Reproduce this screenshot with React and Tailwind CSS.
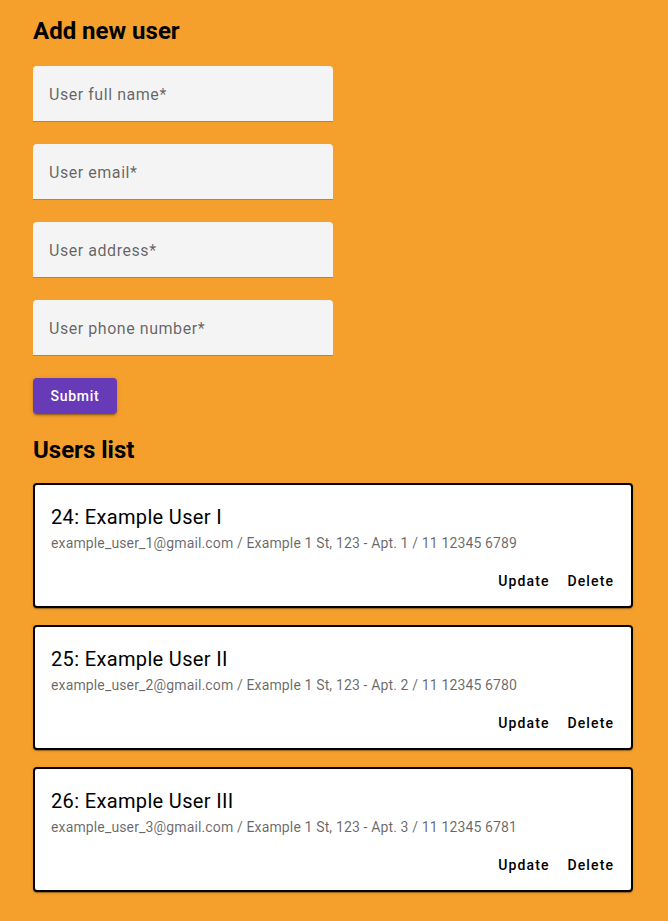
import React from "react";

const fields = ["User full name*", "User email*", "User address*", "User phone number*"];
const users = [
  { id: 24, name: "Example User I", email: "example_user_1@gmail.com", addr: "Example 1 St, 123 - Apt. 1", phone: "11 12345 6789" },
  { id: 25, name: "Example User II", email: "example_user_2@gmail.com", addr: "Example 1 St, 123 - Apt. 2", phone: "11 12345 6780" },
  { id: 26, name: "Example User III", email: "example_user_3@gmail.com", addr: "Example 1 St, 123 - Apt. 3", phone: "11 12345 6781" },
];

export default function App() {
  return (
    <div className="min-h-[921px] bg-[#f5a02c] px-[33px] pt-[15px] pb-[20px] font-['Roboto',sans-serif]">
      <h2 className="text-[24px] leading-[32px] font-bold text-black">Add new user</h2>
      <div className="mt-[19px] flex flex-col gap-[22px]">
        {fields.map((f) => (
          <div key={f} className="w-[300px] h-[56px] rounded-t-[4px] bg-[#f4f4f4] border-b border-[#8a8a8a] flex items-center px-4 pt-[2px]">
            <span className="text-[16px] text-black/60 tracking-[0.55px]">{f}</span>
          </div>
        ))}
      </div>
      <button className="mt-[22px] h-[36px] w-[84px] rounded-[4px] bg-[#673ab7] text-white text-[14px] font-medium tracking-[0.05em] shadow-[0_3px_1px_-2px_rgba(0,0,0,0.2),0_2px_2px_0_rgba(0,0,0,0.14),0_1px_5px_0_rgba(0,0,0,0.12)]">
        Submit
      </button>
      <h2 className="mt-[20px] text-[24px] leading-[32px] font-bold text-black">Users list</h2>
      <div className="mt-[17px] flex flex-col gap-[17px]">
        {users.map((u) => (
          <div key={u.id} className="w-[600px] h-[125px] bg-white border-2 border-black rounded-[4px] shadow-[0_2px_1px_-1px_rgba(0,0,0,0.2),0_1px_1px_0_rgba(0,0,0,0.14),0_1px_3px_0_rgba(0,0,0,0.12)] flex flex-col">
            <div className="px-4 pt-4">
              <div className="text-[20px] leading-[32px] text-black font-normal tracking-[0.35px]">{u.id}: {u.name}</div>
              <div className="text-[14px] leading-[20px] text-black/60 tracking-[0.01em]">{u.email} / {u.addr} / {u.phone}</div>
            </div>
            <div className="mt-[13px] flex justify-end pr-3 gap-2">
              <button className="h-[30px] px-[5px] text-[14px] font-medium tracking-[1.1px] text-black">Update</button>
              <button className="h-[30px] px-[5px] text-[14px] font-medium tracking-[1.1px] text-black">Delete</button>
            </div>
          </div>
        ))}
      </div>
    </div>
  );
}
